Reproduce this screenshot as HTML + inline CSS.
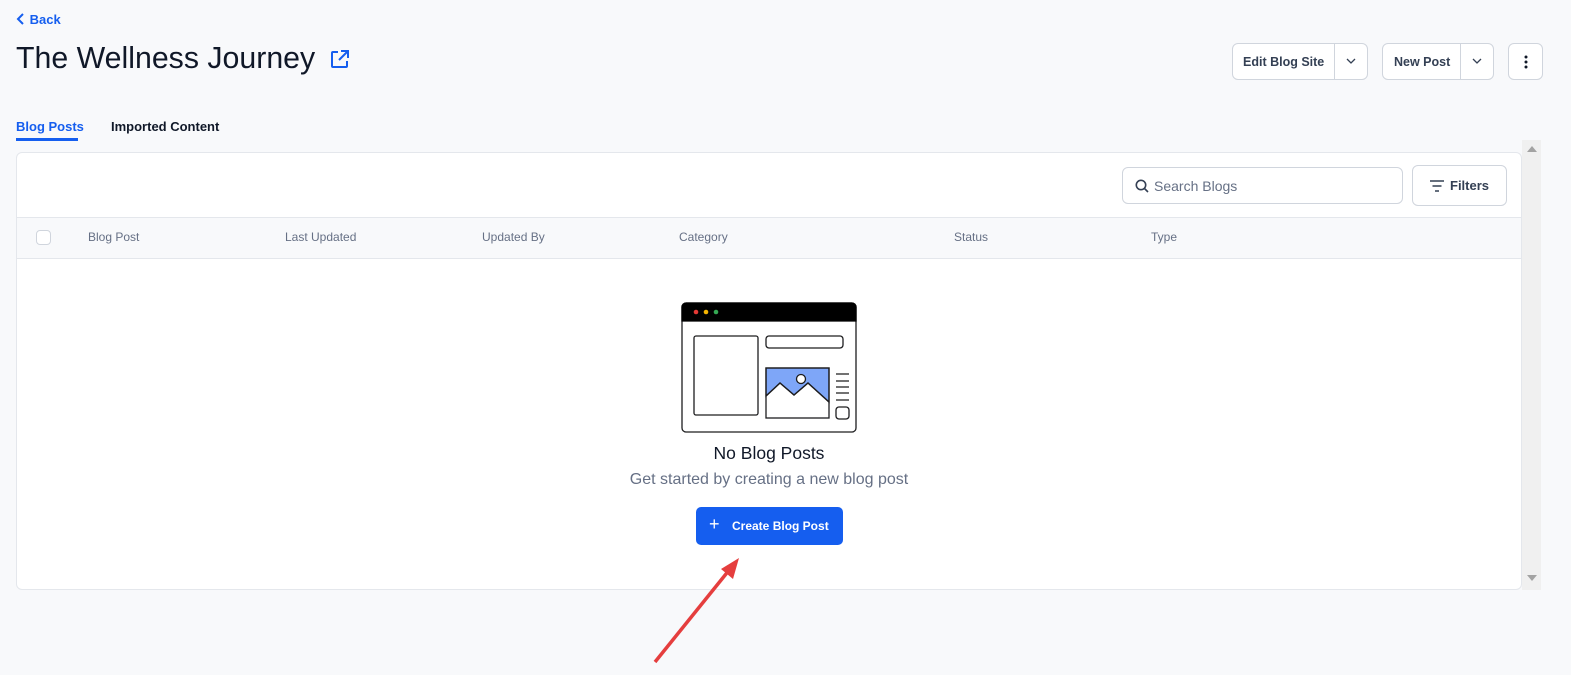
<!DOCTYPE html>
<html><head><meta charset="utf-8"><style>
*{box-sizing:border-box;margin:0;padding:0}
body{width:1571px;height:675px;background:#f8f9fb;font-family:"Liberation Sans",sans-serif;position:relative;overflow:hidden;color:#101828}
.a{position:absolute}
.btn{position:absolute;background:#fff;border:1px solid #d0d5dd;border-radius:6px;font-size:12.5px;color:#344054;font-weight:bold}
.th{position:absolute;top:230px;font-size:12px;color:#667085}
</style></head><body>
<div class="a" style="left:16px;top:12px;font-size:13px;color:#155eef;font-weight:bold">
<svg width="10" height="12" viewBox="0 0 10 12" style="vertical-align:-1px"><path d="M7 1L2 6l5 5" stroke="#155eef" stroke-width="2" fill="none"/></svg> Back</div>
<div class="a" style="left:16px;top:42px;font-size:30.3px;color:#101828">The Wellness Journey</div>
<svg class="a" style="left:329px;top:49px" width="21" height="21" viewBox="0 0 21 21" fill="none" stroke="#155eef" stroke-width="2"><path d="M9 3H4a1 1 0 0 0-1 1v13a1 1 0 0 0 1 1h13a1 1 0 0 0 1-1v-5"/><path d="M12 2h7v7M19 2l-9 9"/></svg>
<div class="btn" style="left:1232px;top:43px;width:136px;height:37px"><span class="a" style="left:10px;top:11px">Edit Blog Site</span><span class="a" style="left:101px;top:0;width:1px;height:35px;background:#d0d5dd"></span><svg class="a" style="left:112px;top:13px" width="12" height="8"><path d="M2 2l4 4 4-4" stroke="#344054" stroke-width="1.3" fill="none"/></svg></div>
<div class="btn" style="left:1382px;top:43px;width:112px;height:37px"><span class="a" style="left:11px;top:11px">New Post</span><span class="a" style="left:77px;top:0;width:1px;height:35px;background:#d0d5dd"></span><svg class="a" style="left:88px;top:13px" width="12" height="8"><path d="M2 2l4 4 4-4" stroke="#344054" stroke-width="1.3" fill="none"/></svg></div>
<div class="btn" style="left:1508px;top:43px;width:35px;height:37px"><svg class="a" style="left:15px;top:10px" width="4" height="16"><circle cx="2" cy="3" r="1.5" fill="#101828"/><circle cx="2" cy="8" r="1.5" fill="#101828"/><circle cx="2" cy="13" r="1.5" fill="#101828"/></svg></div>
<div class="a" style="left:16px;top:119px;font-size:13px;color:#155eef;font-weight:bold">Blog Posts</div>
<div class="a" style="left:16px;top:138px;width:62px;height:3px;background:#155eef"></div>
<div class="a" style="left:111px;top:119px;font-size:13px;color:#101828;font-weight:bold">Imported Content</div>
<div class="a" style="left:1522px;top:140px;width:19px;height:450px;background:#f0f0f0"></div>
<svg class="a" style="left:1527px;top:146px" width="10" height="6"><path d="M0 6L5 0l5 6z" fill="#a3a3a3"/></svg>
<svg class="a" style="left:1527px;top:575px" width="10" height="6"><path d="M0 0l5 6 5-6z" fill="#a3a3a3"/></svg>
<div class="a" style="left:16px;top:152px;width:1506px;height:438px;background:#fff;border:1px solid #e4e7ec;border-radius:6px;overflow:hidden">
 <div class="a" style="left:1105px;top:14px;width:281px;height:37px;border:1px solid #d0d5dd;border-radius:6px"><svg class="a" style="left:12px;top:11px" width="14" height="14" fill="none" stroke="#344054" stroke-width="1.6"><circle cx="6" cy="6" r="4.7"/><path d="M9.5 9.5L13 13"/></svg><span class="a" style="left:31px;top:10px;font-size:14px;color:#667085">Search Blogs</span></div>
 <div class="a" style="left:1395px;top:12px;width:95px;height:41px;border:1px solid #d0d5dd;border-radius:6px"><svg class="a" style="left:16px;top:14px" width="16" height="12" stroke="#344054" stroke-width="1.6"><path d="M1 1h14M3.5 6h9M6 11h4"/></svg><span class="a" style="left:37px;top:12px;font-size:13px;font-weight:bold;color:#344054">Filters</span></div>
 <div class="a" style="left:0;top:64px;width:1506px;height:42px;background:#f8f9fb;border-top:1px solid #e4e7ec;border-bottom:1px solid #e4e7ec"></div>
 <div class="a" style="left:19px;top:77px;width:15px;height:15px;border:1px solid #d0d5dd;border-radius:4px;background:#fff"></div>
</div>
<div class="th" style="left:88px">Blog Post</div>
<div class="th" style="left:285px">Last Updated</div>
<div class="th" style="left:482px">Updated By</div>
<div class="th" style="left:679px">Category</div>
<div class="th" style="left:954px">Status</div>
<div class="th" style="left:1151px">Type</div>
<svg class="a" style="left:681px;top:302px" width="176" height="131" viewBox="0 0 176 131" fill="none" stroke="#1d1d1f" stroke-width="1.3">
<rect x="1" y="1" width="174" height="129" rx="4" fill="#fff"/>
<path d="M1 19V5a4 4 0 0 1 4-4h166a4 4 0 0 1 4 4v14z" fill="#000" stroke="#000"/>
<circle cx="15" cy="10" r="2.3" fill="#e53935" stroke="none"/><circle cx="25" cy="10" r="2.3" fill="#f4b400" stroke="none"/><circle cx="35" cy="10" r="2.3" fill="#34a853" stroke="none"/>
<rect x="13" y="34" width="64" height="79" rx="2"/>
<rect x="85" y="34" width="77" height="12" rx="3"/>
<path d="M85 94l14-13 14 12 14-12 21 19V66H85z" fill="#7ea6f8"/>
<rect x="85" y="66" width="63" height="50"/>
<path d="M85 94l14-13 14 12 14-12 21 19"/>
<circle cx="120" cy="77" r="4.5" fill="#fff"/>
<path d="M155 72h13M155 79h13M155 85h13M155 91h13M155 98h13"/>
<rect x="155" y="105" width="13" height="12" rx="3"/>
</svg>
<div class="a" style="left:0;width:1538px;top:443px;text-align:center;font-size:17.5px;color:#101828">No Blog Posts</div>
<div class="a" style="left:0;width:1538px;top:471px;text-align:center;font-size:16px;color:#667085">Get started by creating a new blog post</div>
<div class="a" style="left:696px;top:507px;width:147px;height:38px;background:#155eef;border-radius:5px;color:#fff;font-size:12px;font-weight:bold"><span class="a" style="left:13px;top:7px;font-size:18px;font-weight:normal">+</span><span class="a" style="left:36px;top:12px">Create Blog Post</span></div>
<svg class="a" style="left:650px;top:555px" width="95" height="112"><path d="M5 107L80 14" stroke="#e53e3e" stroke-width="3.5"/><path d="M89 3L71 14l12 10z" fill="#e53e3e"/></svg>
</body></html>
